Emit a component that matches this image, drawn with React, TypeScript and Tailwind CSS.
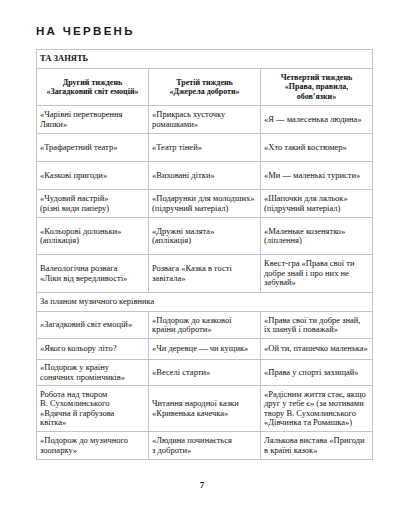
type Row = { h: string; cells: string[][] };

const TOP_ROWS: Row[] = [
  { h: "h-[28px]", cells: [["«Чарівні перетворення", "Ляпки»"], ["«Прикрась хусточку", "ромашками»"], ["«Я — малесенька людина»"]] },
  { h: "h-[28px]", cells: [["«Трафаретний театр»"], ["«Театр тіней»"], ["«Хто такий костюмер»"]] },
  { h: "h-[28px]", cells: [["«Казкові пригоди»"], ["«Виховані дітки»"], ["«Ми — маленькі туристи»"]] },
  { h: "h-[28px]", cells: [["«Чудовий настрій»", "(різні види паперу)"], ["«Подарунки для молодших»", "(підручний матеріал)"], ["«Шапочки для ляльок»", "(підручний матеріал)"]] },
  { h: "h-[37px]", cells: [["«Кольорові долоньки»", "(аплікація)"], ["«Дружні малята»", "(аплікація)"], ["«Маленьке козенятко»", "(ліплення)"]] },
  { h: "h-[38px]", cells: [["Валеологічна розвага", "«Ліки від вередливості»"], ["Розвага «Казка в гості", "завітала»"], ["Квест-гра «Права свої ти", "добре знай і про них не", "забувай»"]] },
];

const BOTTOM_ROWS: Row[] = [
  { h: "h-[27px]", cells: [["«Загадковий світ емоцій»"], ["«Подорож до казкової", "країни доброти»"], ["«Права свої ти добре знай,", "їх шануй і поважай»"]] },
  { h: "h-[21px]", cells: [["«Якого кольору літо?"], ["«Чи деревце — чи кущик»"], ["«Ой ти, пташечко маленька»"]] },
  { h: "h-[26px]", cells: [["«Подорож у країну", "сонячних промінчиків»"], ["«Веселі старти»"], ["«Права у спорті захищай»"]] },
  { h: "h-[46px]", cells: [["Робота над твором", "В. Сухомлинського", "«Вдячна й гарбузова", "квітка»"], ["Читання народної казки", "«Кривенька качечка»"], ["«Радісним життя стає, якщо", "друг у тебе є» (за мотивами", "твору В. Сухомлинського", "«Дівчинка та Ромашка»)"]] },
  { h: "h-[28px]", cells: [["«Подорож до музичного", "зоопарку»"], ["«Людина починається", "з доброти»"], ["Лялькова вистава «Пригоди", "в країні казок»"]] },
];

function Lines({ lines }: { lines: string[] }) {
  return (
    <>
      {lines.map((line, i) => (
        <span key={i} className="block whitespace-nowrap">
          {line}
        </span>
      ))}
    </>
  );
}

function BodyRows({ rows }: { rows: Row[] }) {
  return (
    <>
      {rows.map((row, r) => (
        <tr key={r} className={row.h}>
          {row.cells.map((cell, c) => (
            <td key={c} className="border border-[#c4c4c4] px-[3px] align-middle">
              <Lines lines={cell} />
            </td>
          ))}
        </tr>
      ))}
    </>
  );
}

export default function App() {
  return (
    <div className="h-[512px] w-[404px] bg-white px-[36px] pt-[25px] text-[#111111]">
      <h1 className="h-[24px] [font-family:'Liberation_Sans',Arial,sans-serif] text-[11.5px] font-bold leading-[12px] tracking-[2.3px] text-[#1a1a1a]">
        НА ЧЕРВЕНЬ
      </h1>

      <table className="w-[336px] table-fixed border-collapse [font-family:'Liberation_Serif','Times_New_Roman',serif] text-[8.5px] leading-[9.5px]">
        <colgroup>
          <col className="w-[112px]" />
          <col className="w-[112px]" />
          <col className="w-[112px]" />
        </colgroup>
        <tbody>
          <tr className="h-[19px]">
            <td colSpan={3} className="border border-[#c4c4c4] px-[3px] align-middle font-bold">
              ТА ЗАНЯТЬ
            </td>
          </tr>
          <tr className="h-[37px] text-[8px] font-bold">
            <td className="border border-[#c4c4c4] px-[3px] text-center align-middle">
              <Lines lines={["Другий тиждень", "«Загадковий світ емоцій»"]} />
            </td>
            <td className="border border-[#c4c4c4] px-[3px] text-center align-middle">
              <Lines lines={["Третій тиждень", "«Джерела доброти»"]} />
            </td>
            <td className="border border-[#c4c4c4] px-[3px] text-center align-middle">
              <Lines lines={["Четвертий тиждень", "«Права, правила,", "обов’язки»"]} />
            </td>
          </tr>
          <BodyRows rows={TOP_ROWS} />
          <tr className="h-[19px]">
            <td colSpan={3} className="border border-[#c4c4c4] px-[3px] align-middle">
              За планом музичного керівника
            </td>
          </tr>
          <BodyRows rows={BOTTOM_ROWS} />
        </tbody>
      </table>

      <p className="mt-[19px] text-center [font-family:'Liberation_Serif',serif] text-[9px] font-bold">7</p>
    </div>
  );
}
